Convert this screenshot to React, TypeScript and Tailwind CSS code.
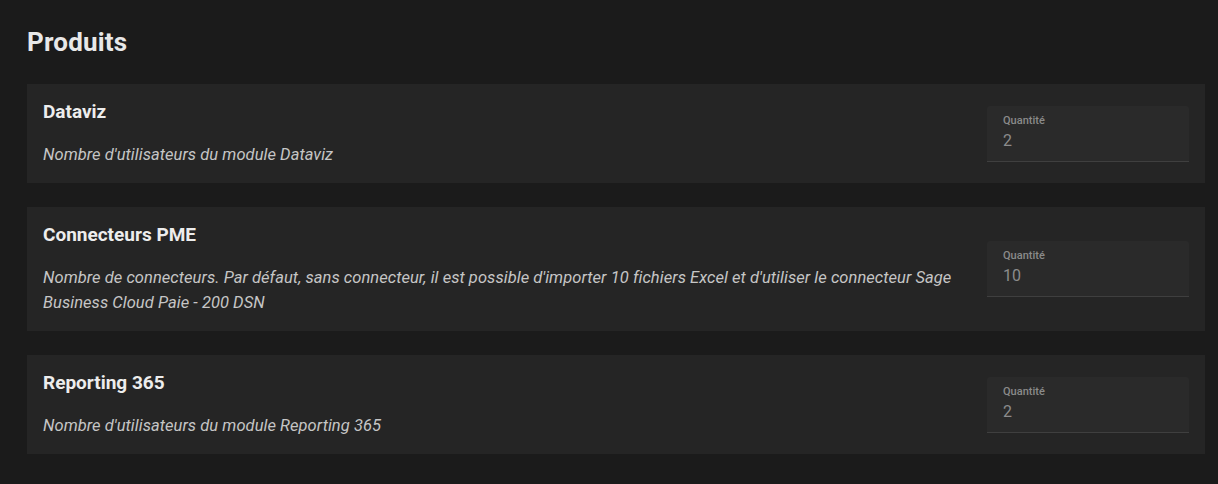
const products = [
  {
    name: "Dataviz",
    description: "Nombre d'utilisateurs du module Dataviz",
    quantity: 2,
  },
  {
    name: "Connecteurs PME",
    description:
      "Nombre de connecteurs. Par défaut, sans connecteur, il est possible d'importer 10 fichiers Excel et d'utiliser le connecteur Sage Business Cloud Paie - 200 DSN",
    quantity: 10,
  },
  {
    name: "Reporting 365",
    description: "Nombre d'utilisateurs du module Reporting 365",
    quantity: 2,
  },
];

export default function App() {
  return (
    <div className="min-h-[484px] w-full bg-[#1b1b1b] pl-[27px] pr-[13px] pt-[26px] pb-8 font-['Roboto',sans-serif]">
      <h2 className="text-[26px] leading-8 font-bold tracking-[0.2px] text-[#e8e8e8]">Produits</h2>

      <div className="mt-[26px] flex flex-col gap-6">
        {products.map((product) => (
          <div
            key={product.name}
            className="flex items-center gap-6 bg-[#252525] px-4 pt-[16px] pb-[16px]"
          >
            <div className="flex-1">
              <h3 className="text-[19px] leading-6 font-bold text-[#ededed]">
                {product.name}
              </h3>
              <p className="mt-[18px] text-[16.5px] leading-[25px] italic tracking-[0.05px] text-[#c6c6c6]">
                {product.description}
              </p>
            </div>

            <div className="h-[56px] w-[202px] shrink-0 rounded-t-[3px] border-b border-[#3f3f3f] bg-[#2a2a2a] px-4 pt-[8px]">
              <div className="text-[11px] leading-[14px] font-medium text-[#8a8a8a]">
                Quantité
              </div>
              <div className="mt-[3px] text-[16px] leading-5 text-[#8c8c8c]">
                {product.quantity}
              </div>
            </div>
          </div>
        ))}
      </div>
    </div>
  );
}
